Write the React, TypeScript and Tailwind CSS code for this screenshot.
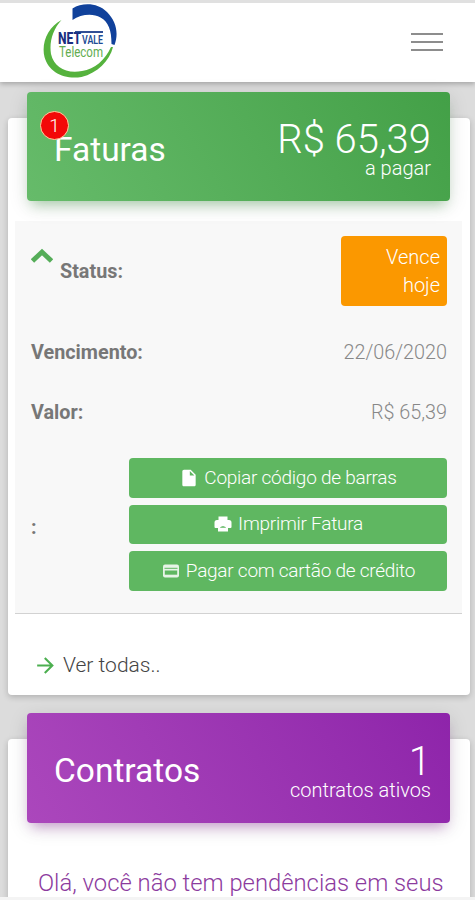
import type { ReactNode } from 'react'
import clsx from 'clsx'
import { MdArrowForward, MdInsertDriveFile } from 'react-icons/md'

function PrintIcon({ className }: { className?: string }) {
  return (
    <svg viewBox="0 0 20 20" className={className}>
      <path d="M5.500 2.500h9V6H16a2.500 2.500 0 0 1 2.500 2.500V13a1 1 0 0 1-1 1H15v3.500H5V14H2.500a1 1 0 0 1-1-1V8.500A2.500 2.500 0 0 1 4 6h1.500z" fill="currentColor" />
      <path d="M7 13.800c1-2 5-2 6 0z" fill="#5fb761" />
    </svg>
  )
}

function CardIcon({ className }: { className?: string }) {
  return (
    <svg viewBox="0 0 20 20" className={className}>
      <rect x="2" y="3.500" width="16" height="13" rx="2" fill="currentColor" opacity=".85" />
      <path d="M3.500 7.300h13" stroke="#5fb761" strokeWidth="1" />
      <path d="M3.800 9.500h12.400v4.200H3.800z" fill="#5fb761" />
    </svg>
  )
}

const ACTIONS = [
  { label: 'Copiar código de barras', icon: MdInsertDriveFile },
  { label: 'Imprimir Fatura', icon: PrintIcon },
  { label: 'Pagar com cartão de crédito', icon: CardIcon },
]

function Logo() {
  return (
    <svg width="76" height="78" viewBox="42 0 76 78" className="-mt-1 ml-[42px]">
      <g transform="translate(0 1)">
        <path d="M72.500 6.500C83 0 98 1 107 10c9 9 12 21 7.500 33l-3-1c0-14-3-22-11-26.500-8-4.500-20-3-28 2.500z" fill="#10419b" />
        <path d="M61.500 18C48 25 41 41 44.500 55c4 15 20 23 37 20 16-4 28-16 31.500-30l-2 0C105 58 95 67 82 69 66 72 54 65 51 52c-2-12 2-25 10.500-34z" fill="#55b23d" />
        <g fontFamily="Roboto, sans-serif">
          <text x="58" y="41.500" fontSize="16.500" fontWeight="800" fill="#1a2f80" textLength="23" lengthAdjust="spacingAndGlyphs">NET</text>
          <text x="82" y="41.500" fontSize="12.500" fontWeight="600" fill="#1d4b93" textLength="21" lengthAdjust="spacingAndGlyphs">VALE</text>
          <text x="59" y="54.500" fontSize="14" fill="#62ad50" textLength="44" lengthAdjust="spacingAndGlyphs">Telecom</text>
        </g>
        <path d="M75 30h28" stroke="#1a3b8a" strokeWidth="1.800" />
      </g>
    </svg>
  )
}

function Row({ label, children, className, labelClass }: { label: string; children: ReactNode; className?: string; labelClass?: string }) {
  return (
    <div className={clsx('flex items-center justify-between', className)}>
      <span className={clsx('font-bold text-[#777]', labelClass)}>{label}</span>
      {children}
    </div>
  )
}

interface BannerProps { title: string; value: string; caption: string; className: string; badge?: string }

function Banner({ title, value, caption, className, badge }: BannerProps) {
  return (
    <div className={clsx('relative ml-[19px] mr-5 -mt-[26px] flex items-center justify-between rounded pl-[27px] pr-[19px] text-white', className)}>
      <h2 className="mt-1.5 text-[33.5px] leading-10">{title}</h2>
      <div className="text-right font-light">
        <p className="mt-1.5 text-[40px] leading-[37px]">{value}</p>
        <p className="text-[20px] leading-5">{caption}</p>
      </div>
      {badge && (
        <span className="absolute left-[13px] top-[19px] flex size-[29px] items-center justify-center rounded-full border border-[#ffd0a0] bg-[#f30808] text-[19px] font-light">{badge}</span>
      )}
    </div>
  )
}

export default function App() {
  return (
    <div className="flex h-[900px] flex-col overflow-hidden bg-[#dcdcdc] font-[Roboto,sans-serif] text-[19.8px] leading-[28px]">
      <header className="relative flex h-[82px] shrink-0 items-center justify-between border-t-[3px] border-[#e0e0e0] bg-white pb-0.5 pr-8 shadow-[0_2px_5px_rgba(0,0,0,0.25)]">
        <Logo />
        <button aria-label="Menu" className="flex w-[32px] flex-col gap-1.5">
          <i className="h-0.5 bg-[#8d8d8d]" />
          <i className="h-0.5 bg-[#8d8d8d]" />
          <i className="h-0.5 bg-[#8d8d8d]" />
        </button>
      </header>

      <main className="flex min-h-0 flex-1 flex-col pl-2 pr-[5px] pt-9">
        {/* Faturas */}
        <section className="flow-root h-[577px] shrink-0 rounded bg-white shadow-[0_2px_6px_rgba(0,0,0,0.2)]">
          <Banner title="Faturas" value="R$ 65,39" caption="a pagar" badge="1" className="h-[109px] bg-linear-60 from-[#66bb6a] to-[#43a047] shadow-[0_5px_20px_rgba(0,0,0,0.12),0_8px_12px_-5px_rgba(76,175,80,0.4)]" />

          <div className="ml-[7px] mr-2 mt-5 h-[393px] border-b border-[#d2d2d2] bg-[#f8f8f8] pl-4 pr-[15px] pt-[15px]">
            <div className="flex justify-between">
              <div className="flex">
                <svg width="22" height="16" viewBox="0 0 22 16" fill="none" stroke="#55ad59" strokeWidth="4.800" className="mt-3">
                  <path d="M1.500 13 11 4l9.500 9" />
                </svg>
                <span className="ml-[7px] mt-[22px] font-bold text-[#777]">Status:</span>
              </div>
              <span className="w-[106px] rounded bg-[#fb9800] py-[7px] pl-8 pr-[7px] text-right text-[20px] font-light leading-7 text-white">Vence hoje</span>
            </div>
            <Row label="Vencimento:" className="mt-[33px]">
              <span className="text-[19.8px] font-light text-[#888]">22/06/2020</span>
            </Row>
            <Row label="Valor:" className="mt-8">
              <span className="text-[19.8px] font-light text-[#888]">R$ 65,39</span>
            </Row>
            <Row label=":" labelClass="mt-2" className="mt-[31px]">
              <div className="flex w-[318px] flex-col gap-[7px]">
                {ACTIONS.map(({ label, icon: Icon }) => (
                  <button key={label} className="flex h-[39.500px] items-center justify-center gap-[5px] rounded bg-[#5fb761] text-[19px] font-light tracking-[-0.25px] text-white">
                    <Icon className="size-5" />
                    {label}
                  </button>
                ))}
              </div>
            </Row>
          </div>

          <a className="ml-[25px] mt-[35px] flex items-center gap-[5px] text-[21px] font-light leading-8 text-[#444]">
            <MdArrowForward className="size-[25px] text-[#4caf50]" />
            Ver todas..
          </a>
        </section>

        {/* Contratos */}
        <section className="mt-11 flow-root flex-1 rounded-t bg-white shadow-[0_2px_6px_rgba(0,0,0,0.2)]">
          <Banner title="Contratos" value="1" caption="contratos ativos" className="h-[110px] bg-linear-60 from-[#ab47bc] to-[#8e24aa] shadow-[0_5px_20px_rgba(0,0,0,0.12),0_8px_12px_-5px_rgba(156,39,176,0.4)]" />
          <p className="ml-[30px] mt-[42px] whitespace-nowrap text-[23.8px] font-light leading-9 text-[#8c3b9e]">Olá, você não tem pendências em seus</p>
        </section>
      </main>
      <div className="relative h-[3px] shrink-0 bg-[#f4f4f4]" />
    </div>
  )
}
